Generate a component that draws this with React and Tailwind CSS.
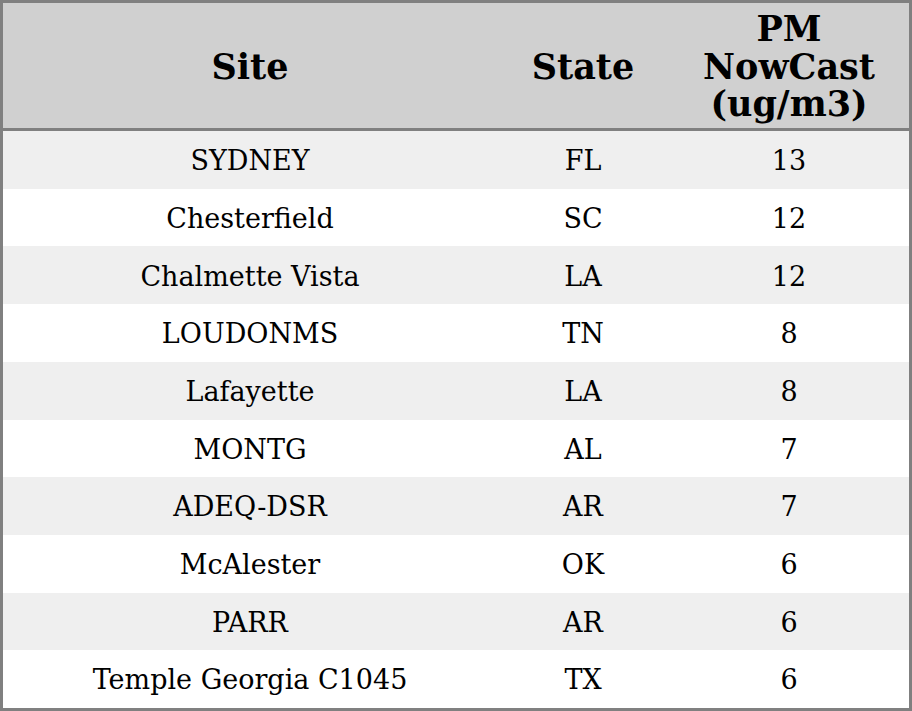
const rows = [
  ['SYDNEY', 'FL', '13'],
  ['Chesterfield', 'SC', '12'],
  ['Chalmette Vista', 'LA', '12'],
  ['LOUDONMS', 'TN', '8'],
  ['Lafayette', 'LA', '8'],
  ['MONTG', 'AL', '7'],
  ['ADEQ-DSR', 'AR', '7'],
  ['McAlester', 'OK', '6'],
  ['PARR', 'AR', '6'],
  ['Temple Georgia C1045', 'TX', '6'],
];

export default function App() {
  return (
    <div className="w-[912px] h-[711px] bg-white text-black font-['DejaVu_Serif',serif]">
      <div className="h-full border-[3px] border-[#808080] flex flex-col">
        <div className="flex h-[128px] pt-[2px] bg-[#d0d0d0] border-b-[3px] border-[#808080] font-bold text-[35px] leading-[37.5px]">
          <div className="w-[494px] flex items-center justify-center">Site</div>
          <div className="w-[172px] flex items-center justify-center">State</div>
          <div className="flex-1 flex items-center justify-center text-center">
            PM
            <br />
            NowCast
            <br />
            (ug/m3)
          </div>
        </div>
        <div className="flex-1 flex flex-col text-[27px]">
          {rows.map(([site, state, pm], i) => (
            <div
              key={site}
              className={`flex-1 flex items-center pt-[3px] ${i % 2 === 0 ? 'bg-[#efefef]' : 'bg-white'}`}
            >
              <div className="w-[494px] text-center">{site}</div>
              <div className="w-[172px] text-center">{state}</div>
              <div className="flex-1 text-center">{pm}</div>
            </div>
          ))}
        </div>
      </div>
    </div>
  );
}
